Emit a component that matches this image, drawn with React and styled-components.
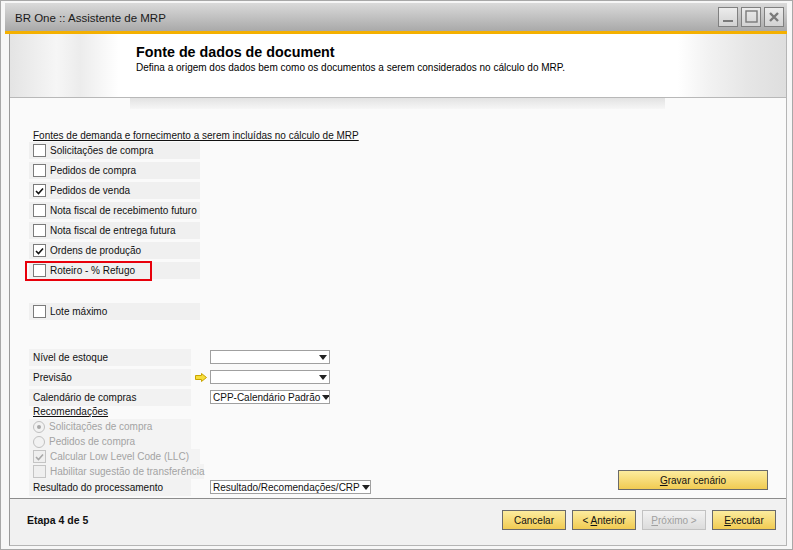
import React from 'react';
import styled, { createGlobalStyle } from 'styled-components';

const GlobalStyle = createGlobalStyle`
  html, body {
    margin: 0;
    padding: 0;
    background: #ffffff;
  }
  * {
    box-sizing: border-box;
  }
`;

const Frame = styled.div`
  width: 793px;
  height: 550px;
  border: 1px solid #a8a8a8;
  background: #f7f7f7;
  padding: 2px 5px 3px 4px;
  display: flex;
  flex-direction: column;
  font-family: 'Liberation Sans', Arial, sans-serif;
  font-size: 10px;
  color: #111;
  overflow: hidden;
`;

const TitleBar = styled.div`
  height: 31px;
  flex: none;
  display: flex;
  align-items: center;
  justify-content: space-between;
  padding: 0 0 0 10px;
  background: linear-gradient(#dadada, #a9a9a9);
  border-bottom: 3px solid #f4b000;
`;

const TitleText = styled.div`
  font-size: 11.5px;
  color: #1a1a1a;
  padding-top: 2px;
`;

const WinButtons = styled.div`
  display: flex;
  gap: 3px;
  padding-right: 3px;
  padding-bottom: 1px;
`;

const WinButton = styled.div`
  width: 20px;
  height: 20px;
  border: 1px solid #808080;
  background: linear-gradient(#ececec, #d2d2d2);
  display: flex;
  align-items: center;
  justify-content: center;
`;

const Panel = styled.div`
  flex: 1;
  min-height: 0;
  display: flex;
  flex-direction: column;
  border-left: 1px solid #9a9a9a;
  border-right: 1px solid #b5b5b5;
  border-bottom: 1px solid #b5b5b5;
  margin-left: 4px;
  background: #fafafa;
`;

const Header = styled.div`
  height: 64px;
  flex: none;
  display: flex;
  background:
    linear-gradient(90deg, #e4e4e4 0%, #f6f6f6 6%, #ececec 9%, #ffffff 14%, #ffffff 86%, #f2f2f2 90%, #e6e6e6 95%, #dedede 100%);
  border-bottom: 1px solid #b8b8b8;
`;

const HeaderText = styled.div`
  padding: 9px 0 0 126px;
`;

const HeaderTitle = styled.div`
  white-space: nowrap;
  font-size: 14.3px;
  font-weight: bold;
  color: #000;
  line-height: 18px;
`;

const HeaderSub = styled.div`
  font-size: 10px;
  line-height: 13px;
  color: #000;
`;

const Strip = styled.div`
  height: 11px;
  margin-left: 120px;
  width: 535px;
  flex: none;
  background: linear-gradient(#e2e2e2, #f6f6f6);
`;

const Body = styled.div`
  flex: 1;
  min-height: 0;
  display: flex;
  justify-content: space-between;
  padding: 21px 18px 3px 19px;
`;

const Form = styled.div`
  display: flex;
  flex-direction: column;
`;

const SectionTitle = styled.div`
  text-decoration: underline;
  padding-left: 4px;
  height: 12px;
  line-height: 11px;
`;

const CheckRow = styled.div`
  width: 171px;
  height: 17px;
  flex: none;
  margin-top: ${(p) => p.$gap ?? 3}px;
  display: flex;
  align-items: center;
  gap: 4px;
  padding-left: 4px;
  background: #f0f0f0;
  position: relative;
`;

const Highlight = styled.div`
  position: absolute;
  left: -4px;
  top: -1px;
  width: 127px;
  height: 20px;
  border: 2px solid #e8000b;
`;

const Box = styled.span`
  width: 13px;
  height: 13px;
  flex: none;
  border: 1px solid ${(p) => (p.$disabled ? '#c4c4c4' : '#7b7b7b')};
  background: ${(p) => (p.$disabled ? '#efefef' : '#ffffff')};
  display: flex;
  align-items: center;
  justify-content: center;
`;

const Radio = styled.span`
  width: 12px;
  height: 12px;
  flex: none;
  border-radius: 50%;
  border: 1px solid #c0c0c0;
  background: #f2f2f2;
  display: flex;
  align-items: center;
  justify-content: center;
  &::after {
    content: '';
    width: 4px;
    height: 4px;
    border-radius: 50%;
    background: ${(p) => (p.$on ? '#a8a8a8' : 'transparent')};
  }
`;

const Label = styled.span`
  color: ${(p) => (p.$disabled ? '#a3a3a3' : '#111')};
  white-space: nowrap;
`;

const FieldRow = styled.div`
  display: flex;
  align-items: center;
  flex: none;
  height: ${(p) => p.$h || 20}px;
  margin-top: ${(p) => p.$mt || 0}px;
`;

const FieldLabel = styled.div`
  width: 162px;
  height: 17px;
  display: flex;
  align-items: center;
  padding-left: 4px;
  background: #f2f2f2;
`;

const ArrowSlot = styled.div`
  width: 19px;
  display: flex;
  justify-content: center;
  align-items: center;
`;

const Select = styled.div`
  width: ${(p) => p.$w || 120}px;
  height: 14px;
  border: 1px solid #a0a0a0;
  background: #ffffff;
  display: flex;
  align-items: center;
  justify-content: space-between;
  padding: 0 2px 0 2px;
  white-space: nowrap;
  overflow: hidden;
`;

const Caret = styled.span`
  width: 0;
  height: 0;
  flex: none;
  border-left: 4px solid transparent;
  border-right: 4px solid transparent;
  border-top: 5px solid #222;
  margin-left: 2px;
`;

const OptRow = styled.div`
  width: ${(p) => p.$w || 162}px;
  height: 15px;
  flex: none;
  display: flex;
  align-items: center;
  gap: 4px;
  padding-left: 4px;
  background: #f3f3f3;
`;

const SubTitle = styled.div`
  height: 12px;
  line-height: 10px;
  flex: none;
  padding-left: 4px;
  text-decoration: underline;
`;

const YellowButton = styled.button`
  width: ${(p) => p.$w || 64}px;
  height: 20px;
  flex: none;
  border: 1px solid ${(p) => (p.$disabled ? '#c2c2c2' : '#6a6a6a')};
  background: ${(p) =>
    p.$disabled
      ? 'linear-gradient(#f2f2f2, #dcdcdc)'
      : 'linear-gradient(#fcec9e, #f1cb52)'};
  color: ${(p) => (p.$disabled ? '#a0a0a0' : '#111')};
  font-family: 'Liberation Sans', Arial, sans-serif;
  font-size: 10px;
  padding: 0;
  cursor: default;
  u {
    text-decoration: underline;
  }
`;

const SaveButton = styled(YellowButton)`
  align-self: flex-end;
  margin-bottom: 5px;
`;

const Footer = styled.div`
  height: 47px;
  flex: none;
  border-top: 1px solid #8c8c8c;
  background: #f1f1f1;
  display: flex;
  align-items: flex-start;
  justify-content: space-between;
  padding: 11px 10px 0 17px;
`;

const StepText = styled.div`
  font-weight: bold;
  font-size: 10.5px;
  line-height: 20px;
`;

const ButtonRow = styled.div`
  display: flex;
  gap: 6px;
`;

const Check = ({ color = '#111' }) => (
  <svg width="9" height="8" viewBox="0 0 9 8">
    <path d="M1 4 L3.5 6.5 L8 1.5" fill="none" stroke={color} strokeWidth="1.6" />
  </svg>
);

const CheckItem = ({ label, checked, gap, children }) => (
  <CheckRow $gap={gap}>
    <Box>{checked && <Check />}</Box>
    <Label>{label}</Label>
    {children}
  </CheckRow>
);

const sources = [
  ['Solicitações de compra', false],
  ['Pedidos de compra', false],
  ['Pedidos de venda', true],
  ['Nota fiscal de recebimento futuro', false],
  ['Nota fiscal de entrega futura', false],
  ['Ordens de produção', true],
];

export default function App() {
  return (
    <Frame>
      <GlobalStyle />
      <TitleBar>
        <TitleText>BR One :: Assistente de MRP</TitleText>
        <WinButtons>
          <WinButton>
            <svg width="12" height="12" viewBox="0 0 12 12">
              <rect x="1" y="9" width="10" height="2" fill="#7a7a7a" />
            </svg>
          </WinButton>
          <WinButton>
            <svg width="13" height="13" viewBox="0 0 13 13">
              <rect x="1" y="1" width="11" height="11" fill="none" stroke="#7a7a7a" strokeWidth="1.4" />
            </svg>
          </WinButton>
          <WinButton>
            <svg width="12" height="12" viewBox="0 0 12 12">
              <path d="M2 2 L10 10 M10 2 L2 10" stroke="#7a7a7a" strokeWidth="2.4" />
            </svg>
          </WinButton>
        </WinButtons>
      </TitleBar>
      <Panel>
        <Header>
          <HeaderText>
            <HeaderTitle>Fonte de dados de document</HeaderTitle>
            <HeaderSub>
              Defina a origem dos dados bem como os documentos a serem considerados no cálculo do MRP.
            </HeaderSub>
          </HeaderText>
        </Header>
        <Strip />
        <Body>
          <Form>
            <SectionTitle>Fontes de demanda e fornecimento a serem incluídas no cálculo de MRP</SectionTitle>
            {sources.map(([label, checked], i) => (
              <CheckItem key={label} label={label} checked={checked} gap={i === 0 ? 0 : 3} />
            ))}
            <CheckItem label="Roteiro - % Refugo" checked={false}>
              <Highlight />
            </CheckItem>
            <CheckItem label="Lote máximo" checked={false} gap={24} />

            <FieldRow $mt={27}>
              <FieldLabel>Nível de estoque</FieldLabel>
              <ArrowSlot />
              <Select>
                <span />
                <Caret />
              </Select>
            </FieldRow>
            <FieldRow>
              <FieldLabel>Previsão</FieldLabel>
              <ArrowSlot>
                <svg width="12" height="9" viewBox="0 0 12 9">
                  <path
                    d="M0.5 2.5 H6.5 V0.5 L11.5 4.5 L6.5 8.5 V6.5 H0.5 Z"
                    fill="#f7de3c"
                    stroke="#c9a400"
                    strokeWidth="1"
                  />
                </svg>
              </ArrowSlot>
              <Select>
                <span />
                <Caret />
              </Select>
            </FieldRow>
            <FieldRow>
              <FieldLabel>Calendário de compras</FieldLabel>
              <ArrowSlot />
              <Select>
                <span>CPP-Calendário Padrão</span>
                <Caret />
              </Select>
            </FieldRow>
            <SubTitle>Recomendações</SubTitle>
            <OptRow>
              <Radio $on />
              <Label $disabled>Solicitações de compra</Label>
            </OptRow>
            <OptRow>
              <Radio />
              <Label $disabled>Pedidos de compra</Label>
            </OptRow>
            <OptRow $w={171}>
              <Box $disabled>
                <Check color="#a8a8a8" />
              </Box>
              <Label $disabled>Calcular Low Level Code (LLC)</Label>
            </OptRow>
            <OptRow $w={175}>
              <Box $disabled />
              <Label $disabled>Habilitar sugestão de transferência</Label>
            </OptRow>
            <FieldRow $h={16}>
              <FieldLabel>Resultado do processamento</FieldLabel>
              <ArrowSlot />
              <Select $w={161}>
                <span>Resultado/Recomendações/CRP</span>
                <Caret />
              </Select>
            </FieldRow>
          </Form>
          <SaveButton $w={150}>
            <u>G</u>ravar cenário
          </SaveButton>
        </Body>
        <Footer>
          <StepText>Etapa 4 de 5</StepText>
          <ButtonRow>
            <YellowButton>Cancelar</YellowButton>
            <YellowButton>
              &lt; <u>A</u>nterior
            </YellowButton>
            <YellowButton $disabled>
              <u>P</u>róximo &gt;
            </YellowButton>
            <YellowButton>
              <u>E</u>xecutar
            </YellowButton>
          </ButtonRow>
        </Footer>
      </Panel>
    </Frame>
  );
}
